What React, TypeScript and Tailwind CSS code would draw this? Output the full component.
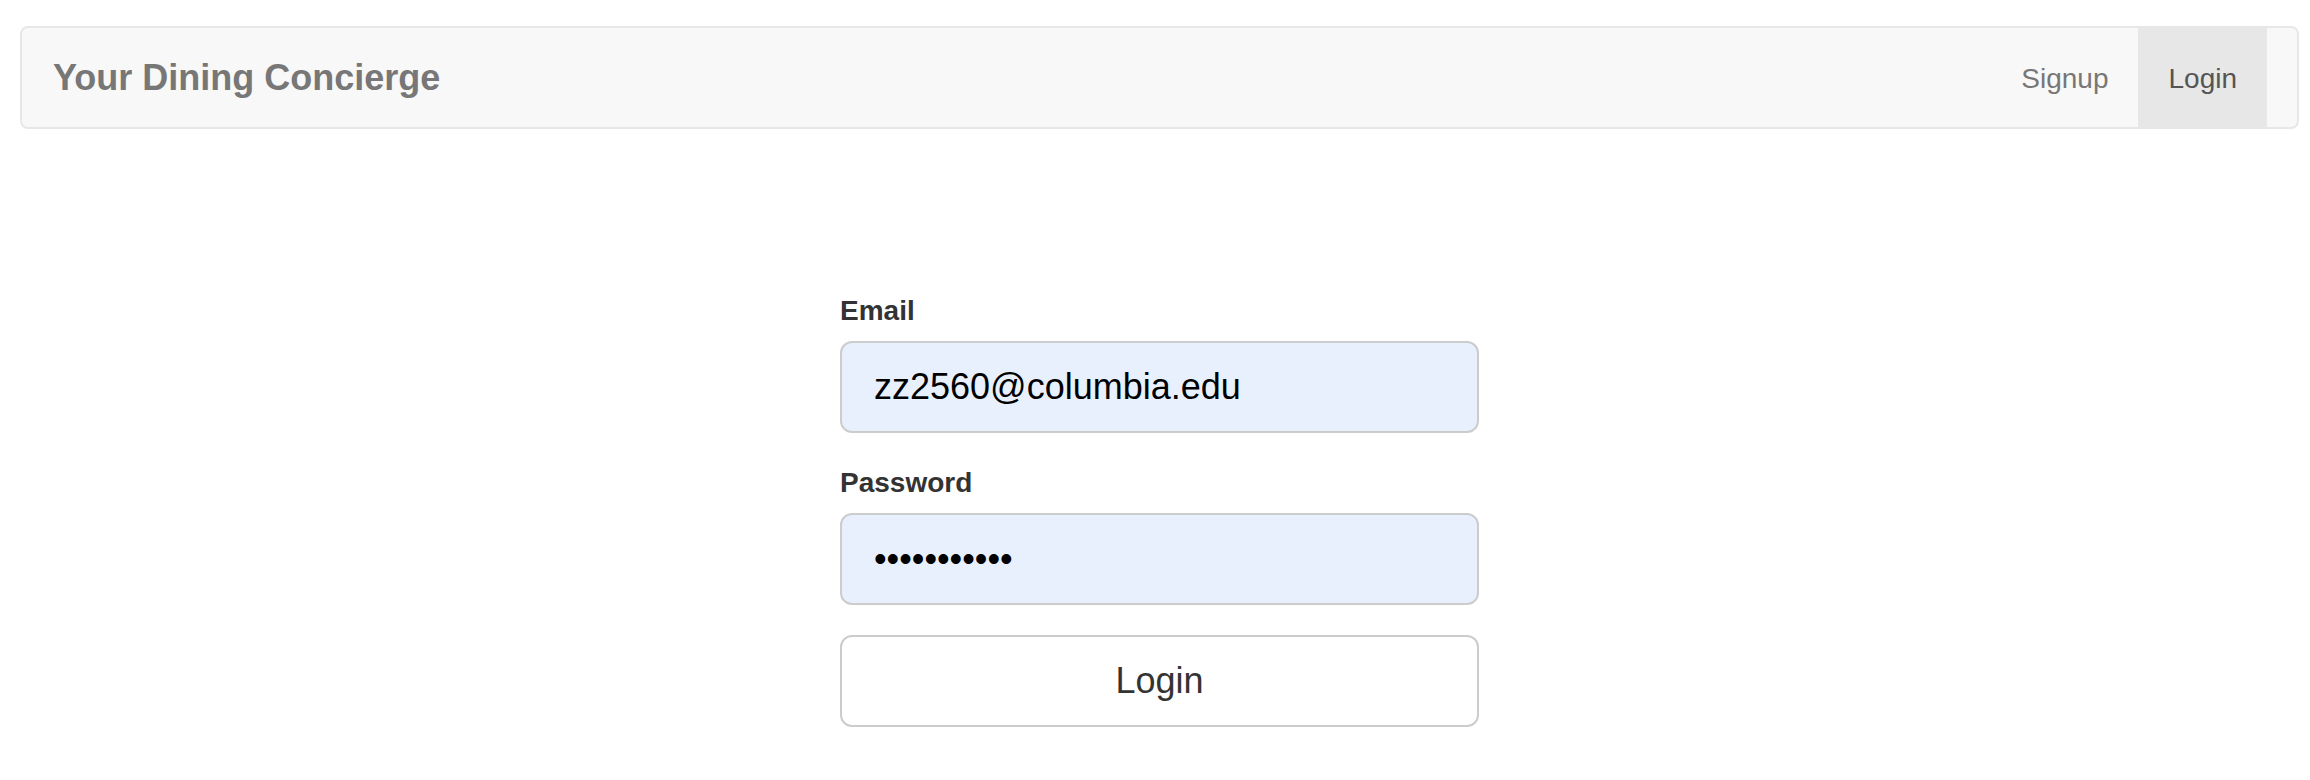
import React from "react";

export default function App() {
  return (
    <div
      className="min-h-[780px] w-full bg-white"
      style={{ fontFamily: '"Liberation Sans", Arial, sans-serif' }}
    >
      <div className="ml-[20px] mr-[11px] pt-[26px]">
        <nav className="flex h-[103px] items-stretch justify-between rounded-[8px] border-2 border-[#e7e7e7] bg-[#f8f8f8]">
          <div className="flex items-center pl-[31px]">
            <span className="text-[36px] font-bold leading-[40px] text-[#777777]">
              Your Dining Concierge
            </span>
          </div>
          <div className="flex items-stretch pr-[30px]">
            <a className="flex items-center px-[30px] pt-[2px] text-[28px] leading-[40px] text-[#777777]">
              Signup
            </a>
            <a className="flex items-center bg-[#e7e7e7] px-[30px] pt-[2px] text-[28px] leading-[40px] text-[#555555]">
              Login
            </a>
          </div>
        </nav>

        <form className="mx-auto mt-[162px] w-[639px]">
          <div className="mb-[30px]">
            <label className="mb-[10px] block text-[28px] font-bold leading-[40px] text-[#333333]">
              Email
            </label>
            <input
              type="email"
              readOnly
              value="zz2560@columbia.edu"
              className="block h-[92px] w-full rounded-[12px] border-2 border-[#cccccc] bg-[#e8f0fe] px-[32px] text-[36px] text-black outline-none"
              style={{ fontFamily: '"Liberation Sans", Arial, sans-serif' }}
            />
          </div>
          <div className="mb-[30px]">
            <label className="mb-[10px] block text-[28px] font-bold leading-[40px] text-[#333333]">
              Password
            </label>
            <input
              type="password"
              readOnly
              value="abcdefghijk"
              className="block h-[92px] w-full rounded-[12px] border-2 border-[#cccccc] bg-[#e8f0fe] px-[32px] text-[36px] text-black outline-none"
              style={{ fontFamily: '"Liberation Sans", Arial, sans-serif' }}
            />
          </div>
          <button
            type="button"
            className="block h-[92px] w-full rounded-[12px] border-2 border-[#cccccc] bg-white text-[36px] text-[#333333]"
          >
            Login
          </button>
        </form>
      </div>
    </div>
  );
}
